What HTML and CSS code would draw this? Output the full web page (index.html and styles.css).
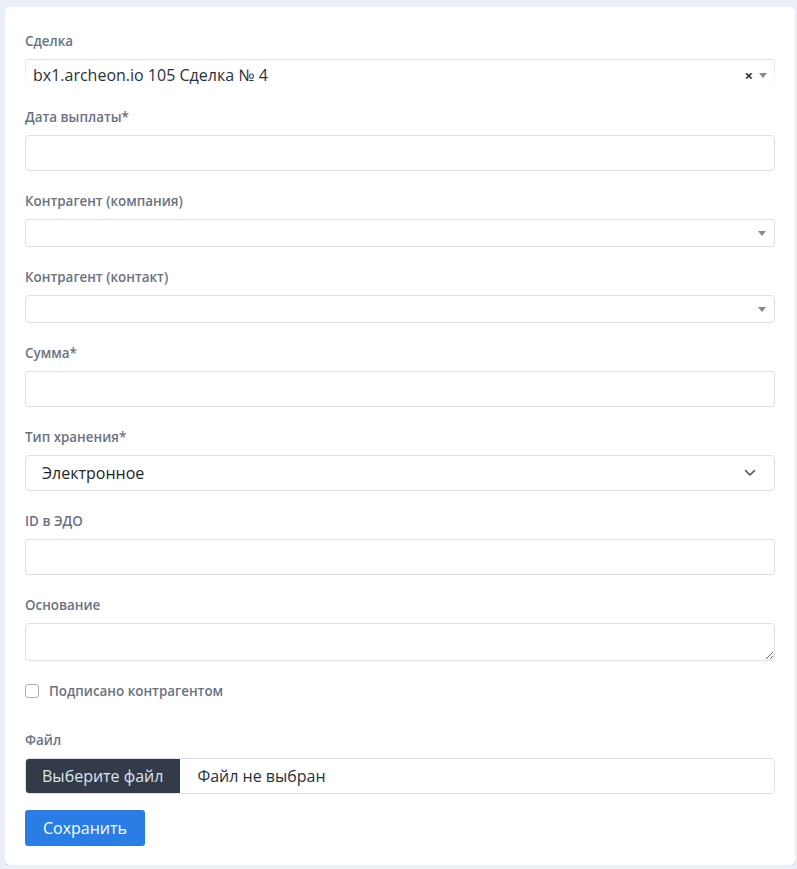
FILE: index.html
```html
<!DOCTYPE html>
<html lang="ru">
<head>
    <meta charset="UTF-8">
    <title>Выплата</title>
    <link rel="stylesheet" href="styles.css">
</head>
<body>
    <div class="card">
        <form class="form">
            <div class="group">
                <label class="label">Сделка</label>
                <div class="s2 s2-filled">
                    <span class="s2-text">bx1.archeon.io 105 Сделка № 4</span>
                    <span class="s2-clear">×</span>
                    <span class="s2-arrow"></span>
                </div>
            </div>

            <div class="group">
                <label class="label">Дата выплаты*</label>
                <input class="input" type="text">
            </div>

            <div class="group">
                <label class="label">Контрагент (компания)</label>
                <div class="s2">
                    <span class="s2-text"></span>
                    <span class="s2-arrow"></span>
                </div>
            </div>

            <div class="group">
                <label class="label">Контрагент (контакт)</label>
                <div class="s2">
                    <span class="s2-text"></span>
                    <span class="s2-arrow"></span>
                </div>
            </div>

            <div class="group">
                <label class="label">Сумма*</label>
                <input class="input" type="text">
            </div>

            <div class="group">
                <label class="label">Тип хранения*</label>
                <div class="select">
                    <span>Электронное</span>
                    <svg class="chevron" width="12" height="8" viewBox="0 0 12 8">
                        <path d="M1.5 1.5 L6 6 L10.5 1.5" fill="none" stroke="#4a5260" stroke-width="1.6" stroke-linecap="round" stroke-linejoin="round"/>
                    </svg>
                </div>
            </div>

            <div class="group">
                <label class="label">ID в ЭДО</label>
                <input class="input" type="text">
            </div>

            <div class="group">
                <label class="label">Основание</label>
                <textarea class="textarea"></textarea>
            </div>

            <div class="check">
                <span class="box"></span>
                <span class="check-label">Подписано контрагентом</span>
            </div>

            <div class="group">
                <label class="label">Файл</label>
                <div class="file">
                    <span class="file-btn">Выберите файл</span>
                    <span class="file-name">Файл не выбран</span>
                </div>
            </div>

            <button class="btn" type="button">Сохранить</button>
        </form>
    </div>
</body>
</html>
```

FILE: styles.css
```css
html,
body {
    margin: 0;
    background: #eaeef5;
}

body {
    padding: 7px 2px 0 5px;
    font-family: "Open Sans", "Noto Sans", sans-serif;
    color: #212529;
}

.card {
    background: #fff;
    border-radius: 5px;
    box-shadow: 0 2px 0 #d6dce6;
    padding: 24px 20px 19px;
    width: 750px;
}

.form {
    display: flex;
    flex-direction: column;
}

.group {
    display: flex;
    flex-direction: column;
    margin-bottom: 20px;
}

.group:first-child {
    margin-bottom: 19px;
}

.label {
    font-size: 13.4px;
    font-weight: 600;
    line-height: 20px;
    color: #6a7282;
    margin-bottom: 8px;
}

.input {
    box-sizing: border-box;
    height: 36px;
    border: 1px solid #dbe1ea;
    border-radius: 4px;
    margin: 0;
    padding: 0 12px;
    background: #fff;
}

/* select2 */
.s2 {
    box-sizing: border-box;
    height: 28px;
    border: 1px solid #dbe1ea;
    border-radius: 4px;
    display: flex;
    align-items: center;
    padding: 0 8px;
    gap: 6px;
}

.s2-filled {
    height: 29px;
    border: none;
    border-top: 1px solid #dbe1ea;
    border-radius: 4px 4px 0 0;
    background:
        linear-gradient(#dbe1ea, rgba(219, 225, 234, 0)) left top / 1px 100% no-repeat,
        linear-gradient(#dbe1ea, rgba(219, 225, 234, 0)) right top / 1px 100% no-repeat;
    padding-top: 2px;
}

.s2-text {
    flex: 1;
    font-size: 16px;
    line-height: 24px;
    color: #2b3038;
}

.s2-clear {
    font-size: 15px;
    font-weight: 700;
    color: #333;
    line-height: 1;
}

.s2-arrow {
    width: 0;
    height: 0;
    border-left: 4px solid transparent;
    border-right: 4px solid transparent;
    border-top: 5px solid #888;
}

.select {
    box-sizing: border-box;
    height: 36px;
    border: 1px solid #dbe1ea;
    border-radius: 4px;
    display: flex;
    align-items: center;
    justify-content: space-between;
    padding: 0 18px 0 16px;
    font-size: 16px;
}

.textarea {
    box-sizing: border-box;
    height: 38px;
    border: 1px solid #dbe1ea;
    border-radius: 4px;
    margin: 0;
    resize: vertical;
    font-family: inherit;
}

.check {
    display: flex;
    align-items: center;
    gap: 10px;
    margin: 0 0 29px;
    height: 20px;
}

.box {
    box-sizing: border-box;
    width: 14px;
    height: 14px;
    border: 1px solid #a9b0bc;
    border-radius: 3px;
}

.check-label {
    font-size: 13.4px;
    font-weight: 600;
    color: #6a7282;
}

.file {
    box-sizing: border-box;
    height: 36px;
    border: 1px solid #dbe1ea;
    border-radius: 4px;
    display: flex;
    align-items: stretch;
    overflow: hidden;
    font-size: 16px;
}

.file-btn {
    background: #343b48;
    color: #dfe3ea;
    display: flex;
    align-items: center;
    padding: 0 17px 0 16px;
    margin-right: 17px;
}

.file-name {
    display: flex;
    align-items: center;
    color: #2b3038;
}

.btn {
    align-self: flex-start;
    margin-top: -4px;
    width: 120px;
    height: 36px;
    border: none;
    border-radius: 3px;
    background: #2b7de6;
    color: #fff;
    font-family: inherit;
    font-size: 16px;
}
```
